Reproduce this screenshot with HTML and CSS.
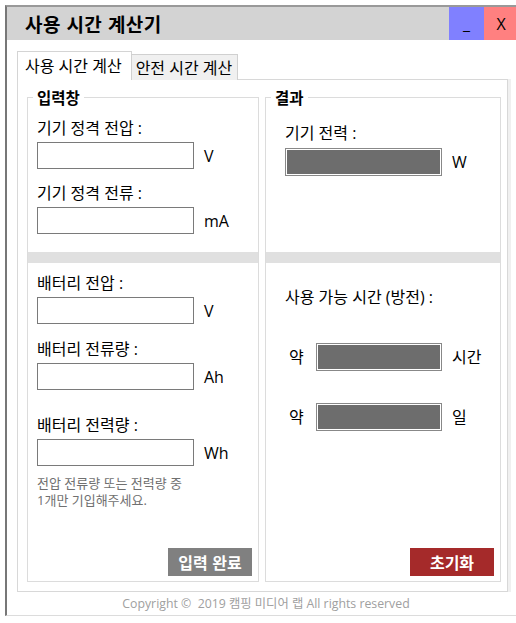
FILE: index.html
```html
<!DOCTYPE html>
<html lang="ko">
<head>
<meta charset="utf-8">
<title>사용 시간 계산기</title>
<link rel="stylesheet" href="styles.css">
</head>
<body>
<div class="window">
  <div class="titlebar">
    <div class="title">사용 시간 계산기</div>
    <div class="winbtn min">_</div>
    <div class="winbtn close">X</div>
  </div>
  <div class="tabs">
    <div class="tab active">사용 시간 계산</div>
    <div class="tab">안전 시간 계산</div>
  </div>
  <div class="panel">
    <fieldset class="box box-input">
      <legend>입력창</legend>
      <div class="sec in-top">
        <div class="field">
          <div class="label">기기 정격 전압 :</div>
          <div class="row"><input class="inp" type="text"><span class="unit">V</span></div>
        </div>
        <div class="field">
          <div class="label">기기 정격 전류 :</div>
          <div class="row"><input class="inp" type="text"><span class="unit">mA</span></div>
        </div>
      </div>
      <div class="band"></div>
      <div class="sec in-bottom">
        <div class="field">
          <div class="label">배터리 전압 :</div>
          <div class="row"><input class="inp" type="text"><span class="unit">V</span></div>
        </div>
        <div class="field field-gap">
          <div class="label">배터리 전류량 :</div>
          <div class="row"><input class="inp" type="text"><span class="unit">Ah</span></div>
        </div>
        <div class="field">
          <div class="label">배터리 전력량 :</div>
          <div class="row"><input class="inp" type="text"><span class="unit">Wh</span></div>
        </div>
        <p class="note">전압 전류량 또는 전력량 중<br>1개만 기입해주세요.</p>
        <button class="btn btn-gray" type="button">입력 완료</button>
      </div>
    </fieldset>
    <fieldset class="box box-result">
      <legend>결과</legend>
      <div class="sec out-top">
        <div class="label label-res">기기 전력 :</div>
        <div class="row"><div class="res res-wide"></div><span class="unit">W</span></div>
      </div>
      <div class="band"></div>
      <div class="sec out-bottom">
        <div class="label">사용 가능 시간 (방전) :</div>
        <div class="rrow rrow-first"><span class="approx">약</span><div class="res"></div><span class="unit">시간</span></div>
        <div class="rrow rrow-second"><span class="approx">약</span><div class="res"></div><span class="unit">일</span></div>
        <button class="btn btn-red" type="button">초기화</button>
      </div>
    </fieldset>
  </div>
  <div class="footer">Copyright © &nbsp;2019 캠핑 미디어 랩 All rights reserved</div>
</div>
</body>
</html>
```

FILE: styles.css
```css
* { box-sizing: border-box; }
html, body {
  margin: 0;
  padding: 0;
  background: #fff;
  overflow: hidden;
}
body {
  font-family: "Open Sans", "Noto Sans CJK KR", sans-serif;
  font-size: 16px;
  color: #000;
}
.window {
  margin: 5px 0 0 5px;
  width: 513px;
  border-top: 2px solid #999;
  border-left: 2px solid #777;
  border-bottom: 1px solid #dcdcdc;
}
.titlebar {
  display: flex;
  height: 33px;
  background: #d3d3d3;
}
.title {
  flex: 1;
  padding-left: 18px;
  font-family: "Noto Sans CJK KR", sans-serif;
  font-size: 19px;
  font-weight: bold;
  line-height: 33px;
  letter-spacing: 0.4px;
}
.winbtn {
  display: flex;
  align-items: center;
  justify-content: center;
  font-family: "Open Sans", sans-serif;
  font-size: 16px;
}
.min { width: 35px; background: #8080ff; }
.close { width: 34px; background: #ff8080; }
.tabs {
  display: flex;
  align-items: flex-end;
  margin-top: 11px;
  margin-bottom: -1px;
  padding-left: 10px;
  position: relative;
  z-index: 1;
}
.tab {
  display: flex;
  align-items: center;
  height: 26px;
  padding: 0 5px 0 4px;
  margin-left: -1px;
  font-size: 16px;
  line-height: 20px;
  background: #f0f0f0;
  border: 1px solid #d0d0d0;
  border-bottom: none;
}
.tab.active {
  height: 29px;
  margin-left: 0;
  padding: 0 9px 0 7px;
  background: #fff;
  border-color: #d4d4d4;
}
.panel {
  display: flex;
  gap: 6px;
  width: 491px;
  height: 513px;
  margin-left: 10px;
  padding: 9px 6px 9px 9px;
  border: 1px solid #d8d8d8;
  box-shadow: 3px 0 0 #f0f0f0;
}
.box {
  margin: 0;
  padding: 0;
  min-width: 0;
  border: 1px solid #dcdcdc;
}
.box-input { width: 232px; }
.box-result { width: 236px; }
legend {
  margin-left: 5px;
  padding: 0 4px;
  font-family: "Noto Sans CJK KR", sans-serif;
  font-size: 15.5px;
  font-weight: bold;
  line-height: 16px;
}
.sec {
  display: flex;
  flex-direction: column;
  align-items: flex-start;
}
.in-top { height: 147px; padding: 12px 0 0 9px; }
.in-top .field { margin-bottom: 13px; }
.band { height: 11px; background: #e0e0e0; }
.in-bottom { height: 318px; padding: 9px 0 0 9px; }
.in-bottom .field { margin-bottom: 14px; }
.in-bottom .field-gap { margin-bottom: 24px; }
.in-bottom .field:nth-child(3) { margin-bottom: 0; }
.label {
  line-height: 22px;
  margin-bottom: 3px;
  white-space: nowrap;
}
.row {
  display: flex;
  align-items: center;
}
.inp {
  width: 157px;
  height: 27px;
  margin: 0;
  padding: 0 4px;
  border: 1px solid #7a7a7a;
  border-radius: 0;
  background: #fff;
  font: inherit;
  outline: none;
}
.unit {
  margin-left: 10px;
  line-height: 22px;
}
.note {
  margin: 9px 0 0 0;
  font-size: 13px;
  line-height: 17px;
  color: #707070;
  white-space: nowrap;
}
.btn {
  margin-top: auto;
  margin-bottom: 5px;
  margin-right: 6px;
  align-self: flex-end;
  width: 84px;
  height: 28px;
  padding: 0;
  border: none;
  border-radius: 0;
  color: #fff;
  font-family: "Noto Sans CJK KR", sans-serif;
  font-size: 16px;
  font-weight: bold;
  line-height: 28px;
}
.btn-gray { background: #808080; }
.btn-red { background: #a52a2a; }
.out-top { height: 147px; padding: 17px 0 0 19px; }
.label-res { margin-bottom: 4px; }
.res {
  width: 126px;
  height: 28px;
  border: 1px solid #888;
  background: #6d6d6d;
  box-shadow: inset 0 0 0 1px #fff;
}
.res-wide { width: 157px; }
.out-bottom { height: 318px; padding: 23px 0 0 19px; }
.rrow {
  display: flex;
  align-items: center;
  margin-left: 4px;
}
.rrow-first { margin-top: 32px; }
.rrow-second { margin-top: 32px; }
.approx { width: 27px; line-height: 22px; }
.footer {
  height: 23px;
  line-height: 23px;
  padding-left: 7px;
  text-align: center;
  font-size: 12.3px;
  color: #a0a0a0;
  white-space: nowrap;
}
```
